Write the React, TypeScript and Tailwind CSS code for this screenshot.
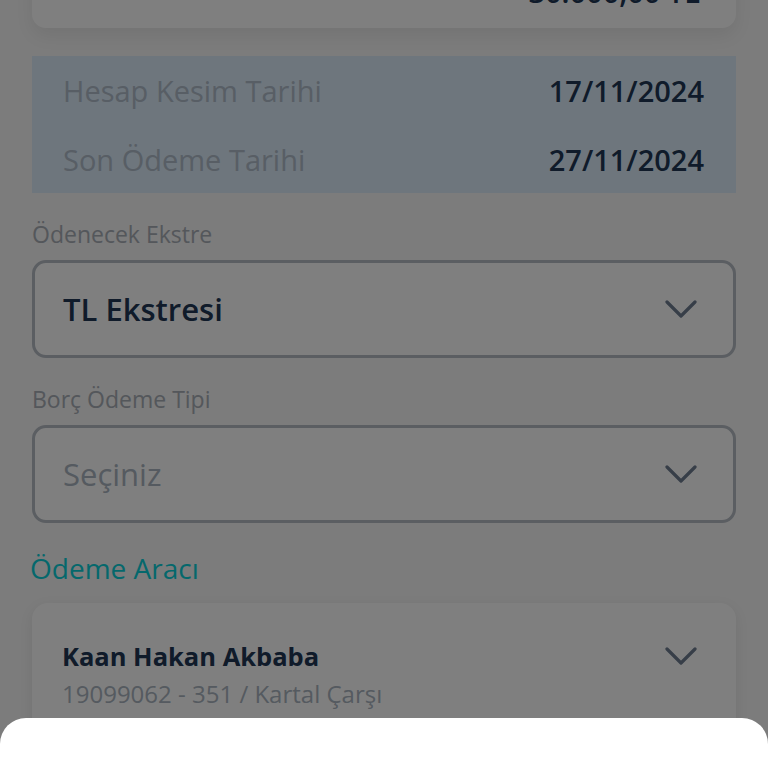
import React from 'react';

const font = { fontFamily: '"Open Sans", "Noto Sans", sans-serif' };

function Chevron() {
  return (
    <svg width="32" height="18" viewBox="0 0 32 18" fill="none" className="shrink-0">
      <path d="M2 2 L16 16 L30 2" stroke="#6e7c90" strokeWidth="3.2" strokeLinecap="round" strokeLinejoin="round" />
    </svg>
  );
}

function SelectField({ label, value, placeholder }: { label: string; value?: string; placeholder?: string }) {
  return (
    <div className="flex flex-col">
      <p className="text-[23px] leading-[32px] text-[#a8aeb6]">{label}</p>
      <div className="mt-[10px] flex h-[98px] items-center justify-between rounded-[14px] border-[3px] border-[#b6bcc4] bg-white pl-[28px] pr-[36px]">
        {value ? (
          <span className="text-[31px] font-semibold text-[#203654]">{value}</span>
        ) : (
          <span className="text-[31px] text-[#aab4c0]">{placeholder}</span>
        )}
        <Chevron />
      </div>
    </div>
  );
}

export default function App() {
  return (
    <div className="relative h-[768px] w-[768px] overflow-hidden bg-[#f8f8f8]" style={font}>
      <div className="flex flex-col px-[32px]">
        {/* Amount card, scrolled mostly out of view */}
        <div className="-mt-[72px] flex h-[100px] items-end justify-end rounded-[14px] bg-white pb-[16px] pr-[36px] shadow-[0_8px_18px_rgba(0,0,0,0.07)]">
          <span className="text-[29px] font-semibold leading-[40px] text-[#203654]">30.000,00 TL</span>
        </div>

        {/* Dates */}
        <div className="mt-[28px] flex flex-col gap-[29px] bg-[#dcedfb] pb-[13px] pl-[31px] pr-[32px] pt-[15px]">
          <div className="flex items-center justify-between leading-[40px]">
            <span className="text-[29px] text-[#b0bccA]">Hesap Kesim Tarihi</span>
            <span className="text-[29px] font-semibold text-[#203654]">17/11/2024</span>
          </div>
          <div className="flex items-center justify-between leading-[40px]">
            <span className="text-[29px] text-[#b0bcca]">Son Ödeme Tarihi</span>
            <span className="text-[29px] font-semibold text-[#203654]">27/11/2024</span>
          </div>
        </div>

        <div className="mt-[25px]">
          <SelectField label="Ödenecek Ekstre" value="TL Ekstresi" />
        </div>
        <div className="mt-[25px]">
          <SelectField label="Borç Ödeme Tipi" placeholder="Seçiniz" />
        </div>

        <h2 className="-ml-[2px] mt-[25px] text-[28px] font-medium leading-[40px] text-[#0ad0d8]">Ödeme Aracı</h2>

        {/* Payment account */}
        <div className="mt-[15px] flex h-[160px] items-start justify-between rounded-[16px] bg-white pl-[30px] pr-[39px] pt-[35px] shadow-[0_4px_14px_rgba(0,0,0,0.08)]">
          <div className="flex flex-col">
            <span className="text-[25.5px] font-bold leading-[36px] text-[#203654]">Kaan Hakan Akbaba</span>
            <span className="mt-[2px] text-[24px] leading-[36px] text-[#aab4c0]">19099062 - 351 / Kartal Çarşı</span>
          </div>
          <div className="mt-[9px]">
            <Chevron />
          </div>
        </div>
      </div>

      {/* Dim overlay */}
      <div className="absolute inset-0 bg-black/50" />

      {/* Bottom sheet */}
      <div className="absolute bottom-0 left-0 right-0 h-[50px] rounded-t-[26px] bg-white" />
    </div>
  );
}
